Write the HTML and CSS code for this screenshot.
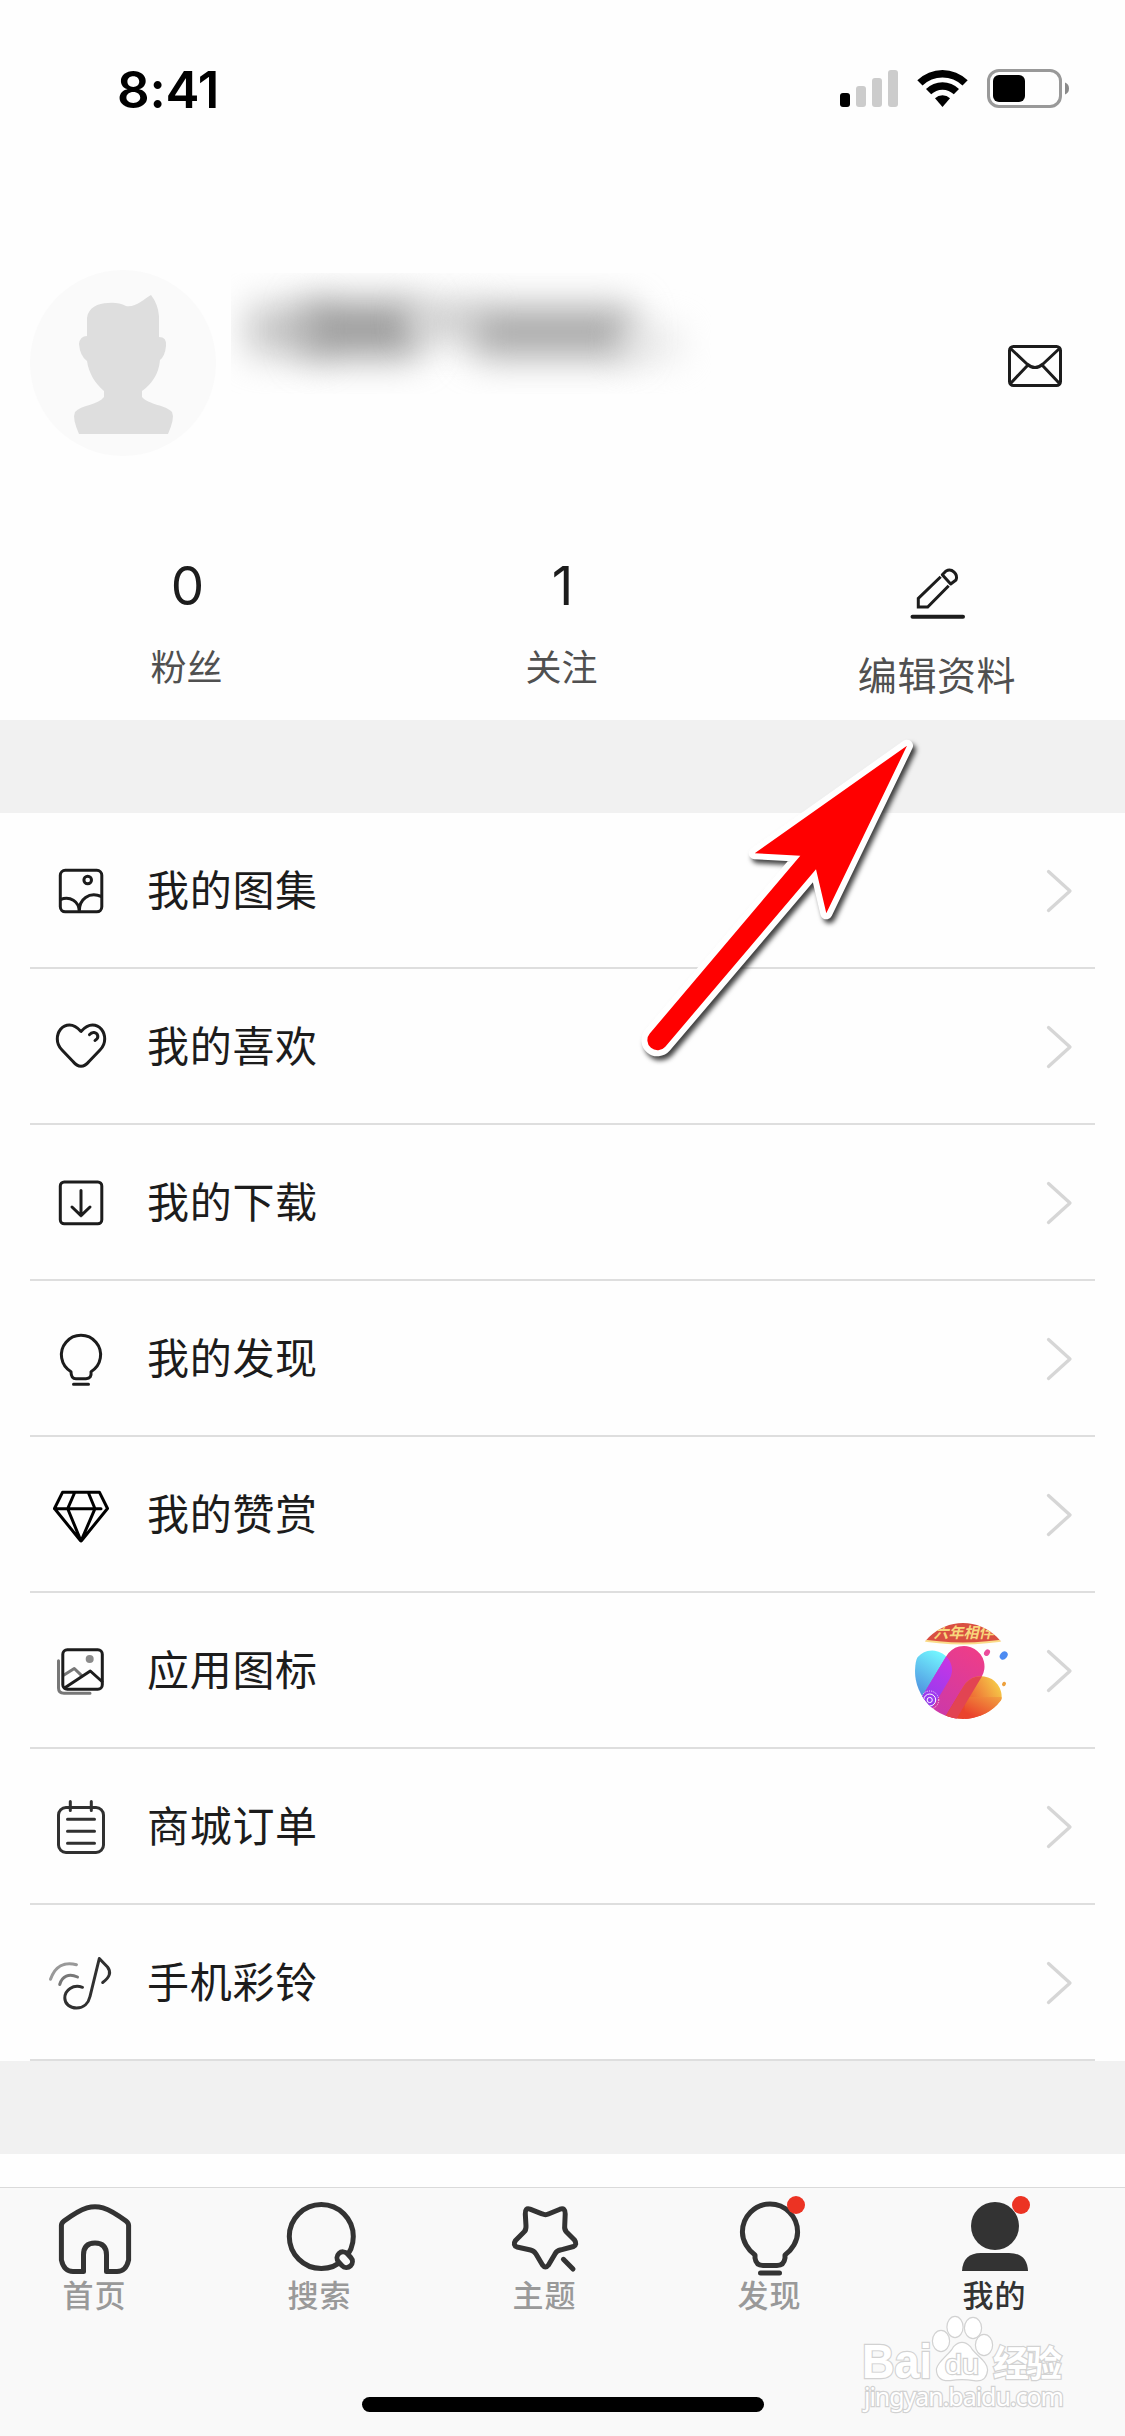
FILE: index.html
```html
<!DOCTYPE html>
<html lang="zh-CN">
<head>
<meta charset="utf-8">
<title>我的</title>
<link rel="stylesheet" href="styles.css">
</head>
<body>
<div class="screen">
  <header class="status">
    <span class="time">8:41</span>
    <svg class="status-icons" width="230" height="40" viewBox="0 0 230 40">
      <rect x="0" y="24" width="10" height="14" rx="3"/>
      <g fill="#ccc"><rect x="16" y="17" width="10" height="21" rx="3"/><rect x="32" y="9" width="10" height="29" rx="3"/><rect x="48" y="1" width="10" height="37" rx="3"/></g>
      <path d="M77.3 11.3A36 36 0 0 1 127.7 11.3L122.5 16.6A28.5 28.5 0 0 0 82.5 16.6Z"/>
      <path d="M86 20A23.5 23.5 0 0 1 119 20L113.8 25.3A16 16 0 0 0 91.2 25.3Z"/>
      <path d="M95 29.2A11 11 0 0 1 110 29.2L102.5 38Z"/>
      <rect x="148.5" y="1.5" width="72" height="36" rx="10.5" fill="none" stroke="#999" stroke-width="3"/>
      <rect x="153" y="6" width="32" height="27" rx="6"/>
      <path d="M225 13.500Q229 15 229 19.500T225 25.500Z" fill="#8a8a8a"/>
    </svg>
  </header>

  <section class="profile">
    <svg class="avatar" width="186" height="186" viewBox="0 0 186 186">
      <circle cx="93" cy="93" r="93" fill="#fafafa"/>
      <path fill="#dedede" d="M57 66V48C58 38 68 33 78 33Q88 32 96 36C105 38 114 29 121 25Q128 34 129 46V67Q137 67 136 76Q135 86 130 90C129 104 121 115 112 121V127C119 135 136 135 142 142Q145 148 138 164H49Q42 148 45 142C51 135 68 135 74 127V121C65 113 59 104 57 91Q50 86 49 74Q50 66 57 66Z"/>
    </svg>
    <div class="name">
      <i class="smudge smudge-a"></i><i class="smudge smudge-b"></i><i class="smudge smudge-c"></i><i class="smudge smudge-d"></i><i class="smudge smudge-e"></i>
    </div>
    <svg class="mail line" width="54" height="42" viewBox="0 0 54 42">
      <rect x="1.500" y="1.500" width="51" height="39" rx="4"/>
      <path d="M2.500 3.500L19 19Q27 26 35 19L51.500 3.500M2.500 38.500L19.500 20.500M51.500 38.500L34.500 20.500"/>
    </svg>
  </section>

  <section class="stats">
    <div class="stat"><b>0</b><span>粉丝</span></div>
    <div class="stat"><b>1</b><span>关注</span></div>
    <div class="stat edit">
      <svg class="line" width="60" height="60" viewBox="0 0 60 60">
        <path d="M32.700 11.700L10.300 33.500V42H19.700L40.700 20.700" stroke-linecap="butt" stroke-linejoin="miter"/>
        <path d="M34.300 9.800L38 6A7.200 7.200 0 0 1 48 15L42.700 19Z"/>
        <path d="M4.500 51.700H55" stroke-width="4"/>
      </svg>
      <span>编辑资料</span>
    </div>
  </section>
  <div class="band"></div>

  <ul class="menu">
    <li><svg class="line" width="66" height="66" viewBox="0 0 66 66"><rect x="12.300" y="12.300" width="41.500" height="41.500" rx="5"/><circle cx="39.700" cy="22" r="3.800"/><path d="M12.500 41.500C22 38 31 43 31.300 53.500C31 41 41 33.500 53.500 38.500"/></svg><span>我的图集</span><svg class="chev" width="26" height="44" viewBox="0 0 26 44"><path d="M2.500 2.500L24 22L2.500 41.500"/></svg></li>
    <li><svg class="line" width="66" height="66" viewBox="0 0 66 66"><path d="M33 17.500C29 13 25.500 11 21.500 11C14 11 9.300 17.500 9.300 25C9.300 30 11 33 14 36L25 47.500C30 53.800 36 53.800 41 47.500L52 36C55 33 56.700 30 56.700 25C56.700 17.500 52 11 44.500 11C40.500 11 37 13 33 17.500Z"/><path d="M41.500 20.700C44 17.500 48.500 18 49.700 21.500Q50.500 24.500 47 26.500"/></svg><span>我的喜欢</span><svg class="chev" width="26" height="44" viewBox="0 0 26 44"><path d="M2.500 2.500L24 22L2.500 41.500"/></svg></li>
    <li><svg class="line" width="66" height="66" viewBox="0 0 66 66"><rect x="12.300" y="12" width="41.500" height="41.800" rx="4"/><path d="M33 20.500V45.500M24 37L33 45.700L42 37"/></svg><span>我的下载</span><svg class="chev" width="26" height="44" viewBox="0 0 26 44"><path d="M2.500 2.500L24 22L2.500 41.500"/></svg></li>
    <li><svg class="line" width="66" height="66" viewBox="0 0 66 66"><path d="M23 45.700A19.600 19.600 0 1 1 43 45.700Q44 52.700 38 52.700H28Q23 52.700 23 45.700ZM25.500 58.300H40.500"/></svg><span>我的发现</span><svg class="chev" width="26" height="44" viewBox="0 0 26 44"><path d="M2.500 2.500L24 22L2.500 41.500"/></svg></li>
    <li><svg class="line black" width="66" height="66" viewBox="0 0 66 66"><path d="M14.500 10.300H51.500L59.500 26.500L34 58Q33 60 32 58L6.500 26.500ZM6.500 26.700H53M26.700 10.500L19.700 26.700L33 59L47 26.700L40.300 10.500"/></svg><span>我的赞赏</span><svg class="chev" width="26" height="44" viewBox="0 0 26 44"><path d="M2.500 2.500L24 22L2.500 41.500"/></svg></li>
    <li><svg class="line" width="66" height="66" viewBox="0 0 66 66"><g stroke="#777"><path d="M10.500 22.700V50Q10.500 55.300 16 55.300H42M16 37L26.300 30.500L33.700 37.700"/></g><circle cx="41.700" cy="21" r="4" fill="#8a8a8a" stroke="none"/><rect x="14.800" y="11.800" width="39.500" height="39.500" rx="4.500"/><path d="M16.500 50L42.300 33L54 43.500"/></svg><span>应用图标</span>
      <svg class="app" width="96" height="96" viewBox="0 0 96 96">
        <defs>
          <clipPath id="disc"><circle cx="48" cy="48" r="48"/></clipPath>
          <clipPath id="pinkShape"><rect x="28.500" y="23" width="41" height="130" rx="20.500" transform="rotate(31 49 43.500)"/></clipPath>
          <linearGradient id="blue" x1="0" y1="0" x2="0" y2="1"><stop offset="0" stop-color="#73f7ff"/><stop offset="1" stop-color="#4678d8"/></linearGradient>
          <linearGradient id="pink" x1="0" y1="0" x2="0" y2="1"><stop offset="0" stop-color="#ee3d88"/><stop offset=".7" stop-color="#c538b0"/></linearGradient>
          <linearGradient id="violet" x1="0" y1="0" x2="0" y2="1"><stop offset="0" stop-color="#c936e4"/><stop offset="1" stop-color="#813df5"/></linearGradient>
          <linearGradient id="orange" gradientUnits="userSpaceOnUse" x1="75" y1="55" x2="55" y2="92"><stop offset="0" stop-color="#f5c647"/><stop offset="1" stop-color="#ea432c"/></linearGradient>
        </defs>
        <g clip-path="url(#disc)">
          <rect x="-2" y="28" width="39" height="58" rx="19" transform="rotate(31 18 47)" fill="url(#blue)"/>
          <rect x="28.500" y="23" width="41" height="130" rx="20.500" transform="rotate(31 49 43.500)" fill="url(#pink)"/>
          <rect x="46" y="53" width="41" height="90" rx="20.500" transform="rotate(31 66 73)" fill="url(#orange)"/>
          <path d="M50 74H86.500V96H50Z" fill="url(#orange)"/>
          <g clip-path="url(#pinkShape)">
            <rect x="-2" y="28" width="39" height="66" rx="19" transform="rotate(31 18 47)" fill="url(#violet)"/>
            <rect x="46" y="53" width="41" height="90" rx="20.500" transform="rotate(31 66 73)" fill="#e24452"/>
          </g>
          <path d="M0 -5H96V16Q48 25 0 16Z" fill="#d94f41" stroke="#fadc8a" stroke-width="1.800"/>
          <text class="ribbon" x="48.500" y="14.500" text-anchor="middle">六年相伴</text>
          <g fill="none" stroke="#fff"><circle cx="14.700" cy="77" r="2.600"/><circle cx="14.700" cy="77" r="6"/><circle cx="14.700" cy="77" r="9" stroke-dasharray="1 1.300" stroke-width=".9"/></g>
        </g>
        <ellipse cx="72" cy="29.700" rx="2.700" ry="3.500" transform="rotate(35 72 29.700)" fill="#ec4c9c"/>
        <ellipse cx="88.700" cy="32.500" rx="3.500" ry="4.500" transform="rotate(40 88.700 32.500)" fill="#4c8bf2"/>
        <ellipse cx="89" cy="61" rx="1.800" ry="2.400" transform="rotate(30 89 61)" fill="#eda03c"/>
      </svg>
      <svg class="chev" width="26" height="44" viewBox="0 0 26 44"><path d="M2.500 2.500L24 22L2.500 41.500"/></svg></li>
    <li><svg class="line soft" width="66" height="66" viewBox="0 0 66 66"><rect x="10.500" y="13.500" width="45" height="45" rx="7.500"/><path d="M22.300 7.500V16.500M43.300 7.500V16.500M19.500 25.300H46.500M19.500 37.300H46.500M19.500 49.300H46.500"/></svg><span>商城订单</span><svg class="chev" width="26" height="44" viewBox="0 0 26 44"><path d="M2.500 2.500L24 22L2.500 41.500"/></svg></li>
    <li><svg class="line soft" width="66" height="66" viewBox="0 0 66 66"><path d="M34.500 37.300C25 34 16.800 40 16.800 48C16.800 54 22 58 28.500 58C36 58 40.500 53 42 46.500L51.300 8.500L59.500 17Q65.500 24.500 54.700 32.500"/><path d="M11.700 34.500C14 26 21 23 29.500 27" stroke="#777"/><path d="M2.500 29.300C7 16 16.500 11.500 28.500 14.700" stroke="#999"/></svg><span>手机彩铃</span><svg class="chev" width="26" height="44" viewBox="0 0 26 44"><path d="M2.500 2.500L24 22L2.500 41.500"/></svg></li>
  </ul>
  <div class="band"></div>

  <nav class="tabs">
    <div class="tab"><svg width="72" height="80" viewBox="0 0 72 80"><path d="M2.400 25.500Q2.400 23 5 21C13 15 21 10 28 7.800Q36 5.500 44 7.800C51 10 59 15 67 21Q69.600 23 69.600 25.500V60Q67 71.500 58 71.500H47.500V55Q47.500 43 36 43T24.500 55V71.500H14Q5 71.500 2.400 60Z"/></svg><span>首页</span></div>
    <div class="tab"><svg width="72" height="80" viewBox="0 0 72 80"><circle cx="37.300" cy="36.500" r="32"/><rect x="54.700" y="51.200" width="12" height="17" rx="6" transform="rotate(-43 60.700 59.700)" fill="#f9f9f9"/></svg><span>搜索</span></div>
    <div class="tab"><svg width="72" height="80" viewBox="0 0 72 80"><path d="M16.300 14Q16 7.500 21 9.200L33 13.800Q36.500 15.500 40 13.800L51 9.200Q56.500 7.500 56.200 14L55.700 26Q55.200 29.500 57.500 32L65.500 40Q68.500 44.500 64.500 46.500L52 49.800Q47.500 50.800 46 54L39.500 65Q36.400 69 33.500 65L27 54Q25 50.800 21.500 50L8 47Q3.500 45 6.500 40.500L15 32Q17.200 30 17 26Z"/><path d="M54.400 59.300L64 69"/></svg><span>主题</span></div>
    <div class="tab"><svg width="72" height="80" viewBox="0 0 72 80"><path d="M21 55C14 50 8.400 41 8.400 32A27.600 28 0 0 1 63.600 32C63.600 41 58 50 51 55V58Q50 65.500 43 65.500H29Q22 65.500 21 58ZM26.500 73H45.500"/></svg><span>发现</span><i class="dot"></i></div>
    <div class="tab active"><svg width="72" height="80" viewBox="0 0 72 80"><circle cx="36" cy="26" r="24"/><path d="M3 71Q4 53 22 53H50Q68 53 69 71Z"/></svg><span>我的</span><i class="dot"></i></div>
  </nav>
  <div class="home-bar"></div>

  <svg class="pointer" width="300" height="340" viewBox="620 720 300 340">
    <path d="M907 745.700L754.700 853.300L800.300 855.700L649.800 1033.500A10 10 0 0 0 665.300 1046.700L816 869.300L826.300 913.300Z"/>
  </svg>
  <svg class="watermark" width="210" height="110" viewBox="0 0 210 110">
    <text class="latin" x="0" y="61" font-size="48" font-weight="700" textLength="70" lengthAdjust="spacingAndGlyphs">Bai</text>
    <ellipse cx="79" cy="24" rx="8" ry="10"/><ellipse cx="93" cy="10" rx="7.500" ry="10"/><ellipse cx="111" cy="11" rx="8" ry="10"/><ellipse cx="122" cy="28" rx="8" ry="10"/>
    <path d="M75 52C77 44 88 38 92 30Q100 22 108 30C112 38 125 44 125 53Q124 65 112 63Q100 61 88 63Q75 64 75 52Z"/>
    <text class="latin" x="83" y="57" font-size="28" font-weight="400" textLength="34" lengthAdjust="spacingAndGlyphs">du</text>
    <text class="cjk" x="131" y="60" font-size="36" font-weight="700" textLength="69">经验</text>
    <text x="2" y="89" font-size="25" font-weight="400" class="url" textLength="200">jingyan.baidu.com</text>
  </svg>
</div>
</body>
</html>
```

FILE: styles.css
```css
* { box-sizing: border-box; }
body { margin: 0; background: #fefefe; }
svg { display: block; flex: none; overflow: visible; }
.screen {
  position: relative;
  width: 1125px;
  height: 2436px;
  overflow: hidden;
  display: flex;
  flex-direction: column;
  background: #fefefe;
  color: #1c1c1c;
  font-family: Inter, "Noto Sans CJK SC", sans-serif;
}
.line {
  fill: none;
  stroke: #1c1c1c;
  stroke-width: 3;
  stroke-linecap: round;
  stroke-linejoin: round;
}
.black { stroke: #000; }
.soft { stroke: #303030; }

/* status bar */
.status {
  height: 270px;
  padding: 69px 55px 0 117px;
  display: flex;
  justify-content: space-between;
}
.time { font-size: 51px; line-height: 41px; font-weight: 600; letter-spacing: -0.2px; color: #000; }

/* profile */
.profile {
  height: 272px;
  padding: 0 63px 0 30px;
  display: flex;
  align-items: flex-start;
}
.name {
  position: relative;
  width: 480px;
  height: 121px;
  margin: 3px auto 0 15px;
  overflow: hidden;
}
.smudge { position: absolute; border-radius: 12px; filter: blur(18px); }
.smudge-a { left: 16px; top: 32px; width: 80px; height: 50px; background: #c4c4c4; }
.smudge-b { left: 72px; top: 28px; width: 118px; height: 56px; background: #9c9c9c; }
.smudge-c { left: 180px; top: 30px; width: 70px; height: 34px; background: #c8c8c8; }
.smudge-d { left: 240px; top: 34px; width: 164px; height: 50px; background: #a8a8a8; }
.smudge-e { left: 390px; top: 58px; width: 60px; height: 26px; background: #e2e2e2; }
.mail { margin-top: 75px; }

/* counters */
.stats {
  height: 178px;
  display: grid;
  grid-template-columns: repeat(3, 375px);
}
.stat { display: flex; flex-direction: column; align-items: center; padding-top: 19px; }
.stat b { font-size: 53px; line-height: 50px; font-weight: 400; }
.stat span { margin: 34px 2px 0 0; font-size: 36px; line-height: 46px; color: #505050; }
.stat.edit { padding-top: 23px; }
.stat.edit span { margin: 28px 1px 0 0; font-size: 39px; line-height: 46px; letter-spacing: 0.6px; }

.band { height: 93px; flex: none; background: #f1f1f1; }

/* menu */
.menu { margin: 0; padding: 0 30px; list-style: none; }
.menu li {
  height: 156px;
  padding: 2px 23px 0 18px;
  border-bottom: 2px solid #dedede;
  display: flex;
  align-items: center;
}
.menu span { margin: 0 auto 0 33px; font-size: 42px; line-height: 60px; letter-spacing: 0.7px; }
.chev { fill: none; stroke: #d6d6d6; stroke-width: 3.3; stroke-linecap: round; stroke-linejoin: round; }
.app { margin-right: 35px; }
.ribbon { fill: #f8d67c; font: italic 700 15px "Noto Sans CJK SC", sans-serif; }

/* tab bar */
.tabs {
  height: 249px;
  margin-top: 33px;
  padding-top: 12px;
  border-top: 1px solid #dadada;
  background: #f9f9f9;
  display: flex;
}
.tabs::before { content: ""; width: 0; margin-left: -18px; }
.tab { position: relative; width: 225px; flex: none; display: flex; flex-direction: column; align-items: center; }
.tab svg { fill: none; stroke: #333; stroke-width: 5; stroke-linecap: round; stroke-linejoin: round; }
.tab span { margin-top: 1px; font-size: 31px; line-height: 30px; font-weight: 500; letter-spacing: 1px; color: #999; }
.tab.active svg { fill: #333; stroke: none; }
.tab.active span { color: #333; }
.dot { position: absolute; left: 130px; top: -4px; width: 18px; height: 18px; border-radius: 50%; background: #ec3323; }
.home-bar { position: absolute; left: 362px; top: 2397px; width: 402px; height: 15px; border-radius: 8px; background: #000; }

/* overlays */
.pointer { position: absolute; left: 620px; top: 720px; filter: drop-shadow(3px 4px 2.5px rgba(0, 0, 0, 0.75)); }
.pointer path { fill: #f00; stroke: #fff; stroke-width: 12; stroke-linejoin: round; paint-order: stroke; }
.watermark { position: absolute; left: 862px; top: 2317px; fill: #fff; stroke: #d2d2d2; stroke-width: 2.4; paint-order: stroke; }
.watermark .latin { font-family: "Liberation Sans", sans-serif; }
.watermark .cjk { font-family: "Noto Sans CJK SC", sans-serif; }
.watermark .url { font-family: "Noto Sans", sans-serif; }
```
